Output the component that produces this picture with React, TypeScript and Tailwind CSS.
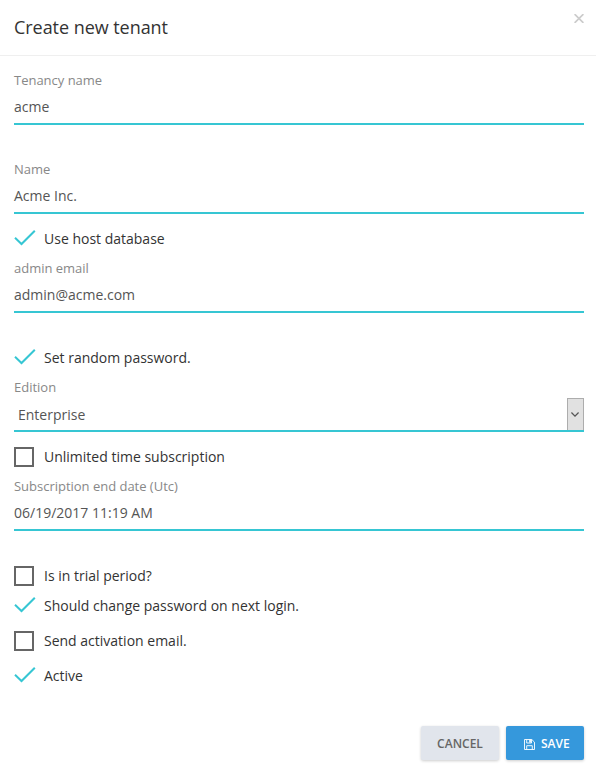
import React from 'react';

function Field({ label, value, cls }: { label: string; value: string; cls: string }) {
  return (
    <div className={`flex flex-col ${cls}`}>
      <label className="h-[18px] text-[13px] leading-[18px] tracking-[-0.015px] text-[#888]">{label}</label>
      <div className="h-[36px] border-b-2 border-[#36c6d3] text-[14px] leading-[36px] text-[#555]">{value}</div>
    </div>
  );
}

function Check({ label, checked, cls }: { label: string; checked?: boolean; cls: string }) {
  return (
    <div className={`flex h-5 items-center ${cls}`}>
      {checked ? (
        <svg width="22" height="20" viewBox="0 0 22 20" fill="none" stroke="#36c6d3" strokeWidth="2">
          <path d="M1 8.8L7.5 15L20.8 1.8" />
        </svg>
      ) : (
        <span className="mr-0.5 size-5 border-2 border-[#666]" />
      )}
      <span className="ml-2 text-[14px] leading-5 text-[#333]">{label}</span>
    </div>
  );
}

export default function App() {
  return (
    <div className="h-[771px] w-[596px] overflow-hidden bg-white font-['Open_Sans',sans-serif]">
      <header className="flex h-[56px] justify-between border-b border-[#efefef] pl-[14px] pr-[12px]">
        <h4 className="pt-[14px] text-[18px] leading-[26px] tracking-[-0.05px] text-[#333]">Create new tenant</h4>
        <svg className="mt-[14px]" width="10" height="9" viewBox="0 0 10 9" stroke="#ccc" strokeWidth="1.7">
          <path d="M.6 .1L9.4 8.9M9.4 .1L.6 8.9" />
        </svg>
      </header>
      <main className="flex flex-col pl-[14px] pr-[12px]">
        <Field label="Tenancy name" value="acme" cls="mt-[15px]" />
        <Field label="Name" value="Acme Inc." cls="mt-[35px]" />
        <Check label="Use host database" checked cls="mt-[15px]" />
        <Field label="admin email" value="admin@acme.com" cls="mt-[10px]" />
        <Check label="Set random password." checked cls="mt-[35px]" />
        <div className="mt-[10px] flex flex-col">
          <label className="h-[18px] text-[13px] leading-[18px] text-[#888]">Edition</label>
          <div className="mt-0.5 flex h-[34px] justify-between border-b-2 border-[#36c6d3] pl-1 text-[14px] leading-[34px] text-[#555]">
            Enterprise
            <span className="flex h-8 w-[17px] items-center justify-center border border-b-0 border-[#adadad] bg-[#e1e1e1] pr-px">
              <svg width="8" height="5" viewBox="0 0 8 5" fill="none" stroke="#555" strokeWidth="1.3"><path d="M.4 .5L4 4.1L7.6 .5" /></svg>
            </span>
          </div>
        </div>
        <Check label="Unlimited time subscription" cls="mt-[15px]" />
        <Field label="Subscription end date (Utc)" value="06/19/2017 11:19 AM" cls="mt-[10px]" />
        <Check label="Is in trial period?" cls="mt-[35px]" />
        <Check label="Should change password on next login." checked cls="mt-[10px]" />
        <Check label="Send activation email." cls="mt-[15px]" />
        <Check label="Active" checked cls="mt-[15px]" />
      </main>
      <footer className="mt-10 flex justify-end gap-[7px] pr-[12px] text-[12px] font-semibold">
        <button className="h-[34px] w-[78px] rounded-[2px] bg-[#e1e5ec] pt-[2px] text-[#666] shadow-[0_1px_3px_rgba(0,0,0,0.2)]">CANCEL</button>
        <button className="flex h-[34px] w-[78px] items-center gap-[6px] rounded-[2px] bg-[#3598dc] pl-[18px] pt-[2px] text-white shadow-[0_1px_3px_rgba(0,0,0,0.2)]">
          <svg width="11" height="11" viewBox="0 0 11 11" fill="none" stroke="white" strokeWidth=".9" strokeLinejoin="round">
            <path d="M.5 .5H7.8L10.5 3.2V10.5H.5ZM2.7 .5V4H7.5V.5M2.7 10.5V6.7H8.3V10.5" />
            <path d="M5.2 .5H6.9V3.6H5.2Z" fill="white" stroke="none" />
          </svg>
          SAVE
        </button>
      </footer>
    </div>
  );
}
